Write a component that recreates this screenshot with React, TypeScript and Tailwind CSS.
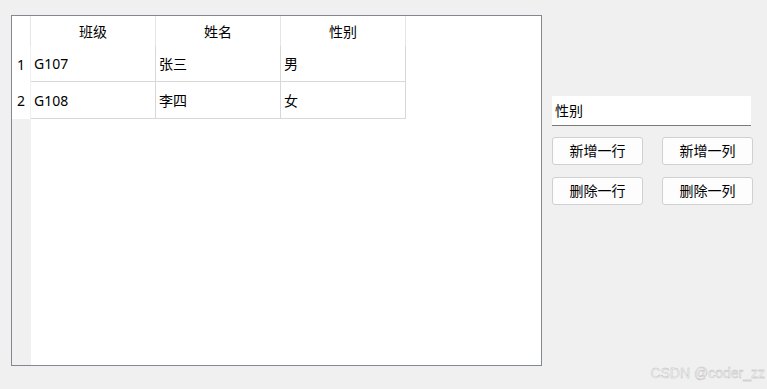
const rows = [
  { no: "1", cls: "G107", name: "张三", sex: "男", h: "h-[36px]" },
  { no: "2", cls: "G108", name: "李四", sex: "女", h: "h-[37px]" },
];

const headers = ["班级", "姓名", "性别"];

function Btn({ label }: { label: string }) {
  return (
    <button className="w-[91px] h-[28px] rounded-[3px] border border-[#d0d0d0] bg-[#fdfdfd] text-[14px] text-black leading-none">
      {label}
    </button>
  );
}

export default function App() {
  return (
    <div
      className="relative w-[767px] h-[389px] bg-[#f0f0f0] flex pl-[11px] pt-[15px] text-[14px] text-black"
      style={{ fontFamily: '"Noto Sans", "Noto Sans CJK SC", sans-serif' }}
    >
      {/* table */}
      <div className="w-[531px] h-[351px] border border-[#828790] bg-white flex">
        <div className="w-[19px] flex flex-col">
          <div className="h-[30px] bg-white border-r border-[#e5e5e5]" />
          {rows.map((r) => (
            <div key={r.no} className={`${r.h} flex items-center justify-center bg-white border-r border-[#f0f0f0]`}>
              {r.no}
            </div>
          ))}
          <div className="flex-1 bg-[#f0f0f0]" />
        </div>
        <div className="flex flex-col">
          <div className="flex h-[30px]">
            {headers.map((t) => (
              <div key={t} className="w-[125px] flex items-center justify-center border-r border-[#e5e5e5]">
                {t}
              </div>
            ))}
          </div>
          {rows.map((r) => (
            <div key={r.no} className={`flex ${r.h}`}>
              {[r.cls, r.name, r.sex].map((v, i) => (
                <div key={i} className="w-[125px] flex items-center pl-[3px] border-r border-b border-[#d8d8d8]">
                  {v}
                </div>
              ))}
            </div>
          ))}
        </div>
      </div>

      {/* side panel */}
      <div className="ml-[10px] pt-[81px] flex flex-col">
        <div className="w-[199px] h-[30px] bg-white border-b border-[#7a7a7a] flex items-center pl-[3px]">
          性别
        </div>
        <div className="flex gap-[19px] mt-[11px]">
          <Btn label="新增一行" />
          <Btn label="新增一列" />
        </div>
        <div className="flex gap-[19px] mt-[12px]">
          <Btn label="删除一行" />
          <Btn label="删除一列" />
        </div>
      </div>

      <div
        className="absolute right-[2px] bottom-[5px] text-[14px] text-[#f6f6f6]"
        style={{ fontFamily: '"Liberation Sans", sans-serif', WebkitTextStroke: "0.4px #bababa" }}
      >
        CSDN @coder_zz
      </div>
    </div>
  );
}
